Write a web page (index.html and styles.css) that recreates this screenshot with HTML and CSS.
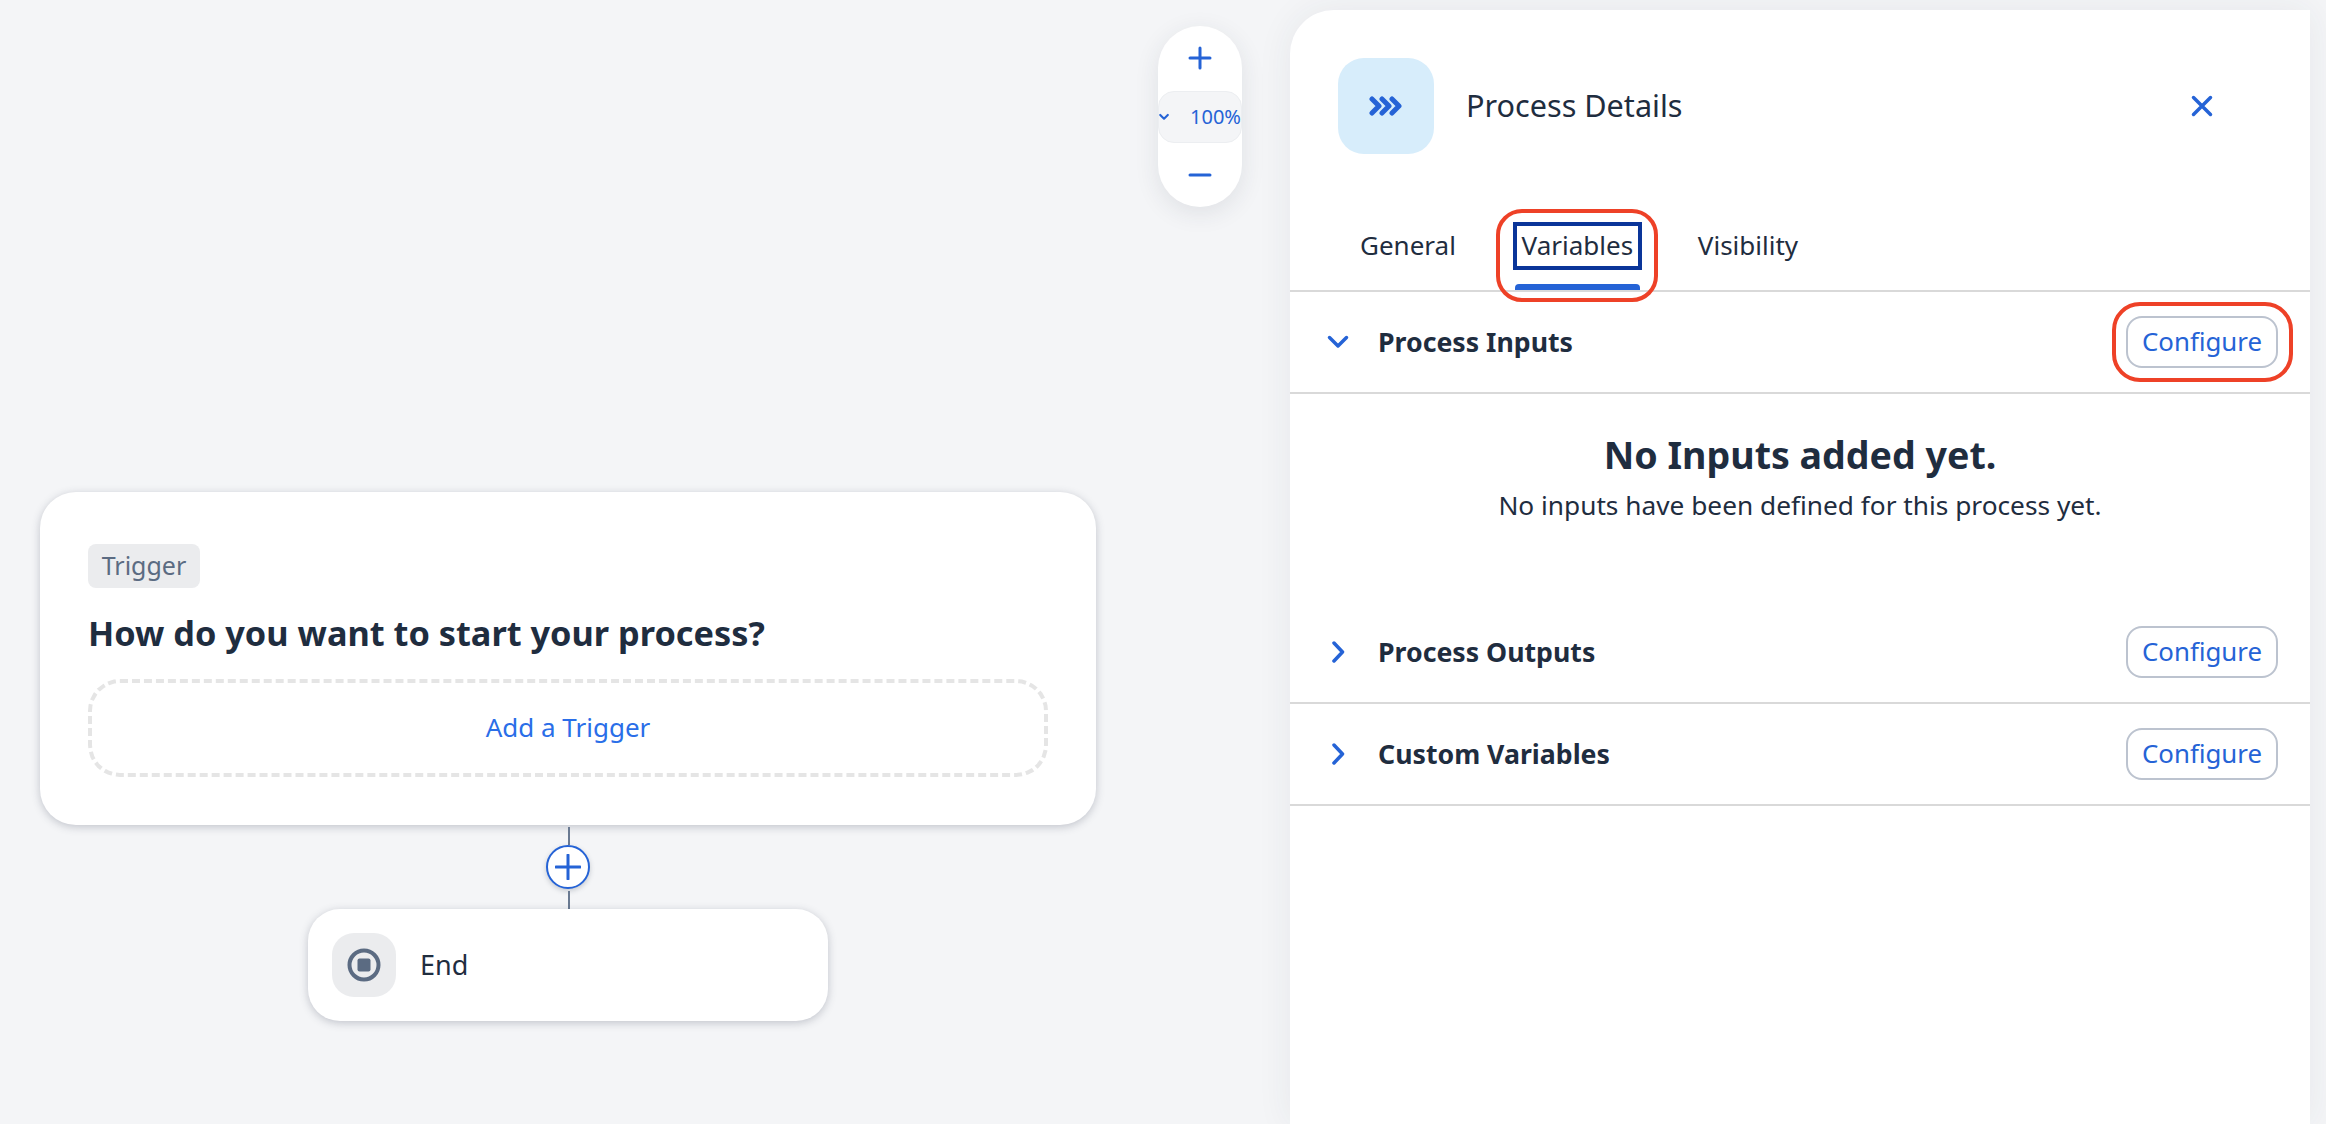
FILE: index.html
```html
<!DOCTYPE html>
<html lang="en">
<head>
    <meta charset="UTF-8">
    <meta name="viewport" content="width=device-width, initial-scale=1.0">
    <title>Process Details</title>
    <link rel="stylesheet" href="styles.css">
</head>
<body>

<div class="app">
    <div class="canvas">
        <div class="zoom">
            <button class="zoom-btn">
                <svg width="24" height="24" viewBox="0 0 24 24"><path d="M12 2v20M2 12h20" class="icon-line"/></svg>
            </button>
            <div class="zoom-level">
                <svg width="12" height="8" viewBox="0 0 12 8"><path d="M1.5 1.5 6 6l4.500-4.500" class="icon-line thin"/></svg>
                <span>100%</span>
            </div>
            <button class="zoom-btn">
                <svg width="24" height="24" viewBox="0 0 24 24"><path d="M2 12h20" class="icon-line"/></svg>
            </button>
        </div>

        <div class="flow">
            <div class="trigger-card">
                <span class="tag">Trigger</span>
                <h3>How do you want to start your process?</h3>
                <div class="add-trigger">Add a Trigger</div>
            </div>
            <div class="line"></div>
            <div class="add-step">
                <svg width="26" height="26" viewBox="0 0 26 26"><path d="M13 1v24M1 13h24" class="icon-line"/></svg>
            </div>
            <div class="line"></div>
            <div class="end-card">
                <div class="end-icon">
                    <svg width="34" height="34" viewBox="0 0 34 34">
                        <circle cx="17" cy="17" r="14.500" fill="none" stroke="#5b6b82" stroke-width="4"/>
                        <rect x="10.500" y="10.500" width="13" height="13" rx="2" fill="#5b6b82"/>
                    </svg>
                </div>
                <span class="end-label">End</span>
            </div>
        </div>
    </div>

    <div class="panel">
        <div class="panel-header">
            <div class="panel-icon">
                <svg width="34" height="20" viewBox="0 0 34 20"><path d="M3 3l7 7-7 7M13 3l7 7-7 7M23 3l7 7-7 7" class="icon-line bold"/></svg>
            </div>
            <div class="panel-title">Process Details</div>
            <svg class="close" width="22" height="22" viewBox="0 0 22 22"><path d="M2.500 2.500l17 17M19.500 2.500l-17 17" class="icon-line mid"/></svg>
        </div>

        <div class="tabs">
            <div class="tab first">General</div>
            <div class="tab active">
                <span class="tab-focus">Variables</span>
                <div class="ring ring-tab"></div>
            </div>
            <div class="tab">Visibility</div>
        </div>

        <div class="section">
            <svg class="chevron" width="22" height="14" viewBox="0 0 22 14"><path d="M2.500 2.500 11 11l8.500-8.500" class="icon-line mid"/></svg>
            <div class="section-title">Process Inputs</div>
            <button class="configure">Configure<div class="ring ring-btn"></div></button>
        </div>
        <div class="empty">
            <h2>No Inputs added yet.</h2>
            <p>No inputs have been defined for this process yet.</p>
        </div>
        <div class="section">
            <svg class="chevron" width="22" height="22" viewBox="0 0 22 22"><path d="M7 2l8.500 9L7 20" class="icon-line mid"/></svg>
            <div class="section-title">Process Outputs</div>
            <button class="configure">Configure</button>
        </div>
        <div class="section">
            <svg class="chevron" width="22" height="22" viewBox="0 0 22 22"><path d="M7 2l8.500 9L7 20" class="icon-line mid"/></svg>
            <div class="section-title">Custom Variables</div>
            <button class="configure">Configure</button>
        </div>
    </div>
</div>

</body>
</html>
```

FILE: styles.css
```css
body {
    margin: 0;
    background: #f4f5f7;
    font-family: "Noto Sans", Arial, sans-serif;
    color: #1f2d3f;
}
h2, h3, p {
    margin: 0;
}
.app {
    display: flex;
    height: 1124px;
    overflow: hidden;
}
.canvas {
    position: relative;
    width: 1290px;
    flex-shrink: 0;
    padding: 492px 0 0 40px;
    box-sizing: border-box;
}
.icon-line {
    fill: none;
    stroke: #2563d6;
    stroke-width: 3;
    stroke-linecap: round;
    stroke-linejoin: round;
}
.icon-line.bold {
    stroke-width: 5;
}
.icon-line.mid {
    stroke-width: 3.500;
}
.icon-line.thin {
    stroke-width: 2.500;
}

/* zoom control */
.zoom {
    position: absolute;
    left: 1158px;
    top: 26px;
    width: 84px;
    height: 181px;
    display: flex;
    flex-direction: column;
    background: white;
    border-radius: 42px;
    box-shadow: 0 6px 24px rgba(40, 50, 70, 0.1);
}
.zoom-btn {
    flex: 1;
    border: none;
    background: none;
    padding: 0;
    display: flex;
    align-items: center;
    justify-content: center;
}
.zoom-level {
    height: 52px;
    display: flex;
    align-items: center;
    box-sizing: border-box;
    background: #f4f5f7;
    border: 1px solid #eceef1;
    border-radius: 16px;
    color: #2563d6;
    font-size: 20px;
    white-space: nowrap;
}
.zoom-level span {
    margin-left: 21px;
}

/* flow */
.flow {
    width: 1056px;
    display: flex;
    flex-direction: column;
    align-items: center;
}
.trigger-card {
    width: 100%;
    height: 333px;
    box-sizing: border-box;
    padding: 52px 48px 0;
    background: white;
    border-radius: 36px;
    box-shadow: 0 2px 8px rgba(60, 70, 90, 0.28);
}
.tag {
    display: inline-block;
    width: 112px;
    height: 44px;
    line-height: 42px;
    text-align: center;
    background: #ebecee;
    border-radius: 8px;
    color: #5b6b82;
    font-size: 25px;
}
.trigger-card h3 {
    margin-top: 22px;
    font-size: 34.300px;
    line-height: 46px;
    font-weight: 700;
}
.add-trigger {
    margin-top: 23px;
    height: 98px;
    box-sizing: border-box;
    padding-bottom: 3px;
    display: flex;
    align-items: center;
    justify-content: center;
    border: 4px dashed #e5e5e5;
    border-radius: 32px;
    color: #2a6ee8;
    font-size: 26px;
}
.line {
    width: 2px;
    height: 18px;
    margin: 2px 0 0 1px;
    background: #6a7a92;
}
.add-step {
    width: 44px;
    height: 44px;
    box-sizing: border-box;
    display: flex;
    align-items: center;
    justify-content: center;
    background: white;
    border: 2px solid #2563d6;
    border-radius: 50%;
    box-shadow: 0 2px 5px rgba(60, 70, 90, 0.25);
}
.end-card {
    width: 520px;
    height: 112px;
    box-sizing: border-box;
    padding-left: 24px;
    display: flex;
    align-items: center;
    gap: 24px;
    background: white;
    border-radius: 32px;
    box-shadow: 0 2px 8px rgba(60, 70, 90, 0.28);
    font-size: 27px;
}
.end-icon {
    width: 64px;
    height: 64px;
    display: flex;
    align-items: center;
    justify-content: center;
    background: #ebecee;
    border-radius: 22px;
}
.end-label {
    margin-bottom: 2px;
}

/* right panel */
.panel {
    width: 1020px;
    margin-top: 10px;
    background: white;
    border-radius: 44px 0 0 0;
    box-shadow: 0 0 36px rgba(40, 50, 70, 0.07);
}
.panel-header {
    display: flex;
    align-items: center;
    height: 96px;
    padding: 48px 97px 0 48px;
}
.panel-icon {
    width: 96px;
    height: 96px;
    display: flex;
    align-items: center;
    justify-content: center;
    background: #d7edfb;
    border-radius: 26px;
}
.panel-title {
    flex: 1;
    margin: 0 0 3px 32px;
    font-size: 30.600px;
}
.tabs {
    display: flex;
    height: 96px;
    margin-top: 40px;
    padding-left: 70px;
    border-bottom: 2px solid #d9d9d9;
    font-size: 26px;
}
.tab {
    position: relative;
    height: 96px;
    line-height: 102px;
}
.tab.first {
    margin-right: 1px;
}
.tab + .tab {
    margin-left: 56px;
}
.tab.active {
    width: 129px;
    text-align: center;
}
.tab-focus {
    position: absolute;
    left: 0;
    right: 0;
    top: 28px;
    height: 48px;
    box-sizing: border-box;
    border: 4px solid #0a3599;
    line-height: 38px;
}
.tab.active::after {
    content: "";
    position: absolute;
    left: 2px;
    right: 2px;
    bottom: 0;
    height: 6px;
    background: #2563d6;
    border-radius: 4px 4px 0 0;
}
.ring {
    position: absolute;
    box-sizing: border-box;
    border: 4px solid #ee4127;
}
.ring-tab {
    left: -17px;
    right: -16px;
    top: 15px;
    bottom: -12px;
    border-radius: 26px;
}
.ring-btn {
    left: -16px;
    right: -17px;
    top: -16px;
    bottom: -16px;
    border-radius: 28px;
}
.section {
    height: 100px;
    display: flex;
    align-items: center;
    padding: 0 32px 0 37px;
    border-bottom: 2px solid #d9d9d9;
}
.chevron {
    flex-shrink: 0;
}
.section-title {
    flex: 1;
    margin: 0 0 2px 29px;
    font-size: 26.700px;
    font-weight: 700;
}
.configure {
    position: relative;
    width: 152px;
    height: 52px;
    padding: 0 0 2px;
    background: white;
    border: 2px solid #bcc3cf;
    border-radius: 16px;
    color: #2563d6;
    font-family: inherit;
    font-size: 25.800px;
}
.empty {
    height: 208px;
    padding-top: 38px;
    box-sizing: border-box;
    text-align: center;
}
.empty h2 {
    font-size: 37.600px;
    line-height: 46px;
    font-weight: 700;
}
.empty p {
    margin-top: 9px;
    font-size: 26.250px;
    line-height: 36px;
}
```
